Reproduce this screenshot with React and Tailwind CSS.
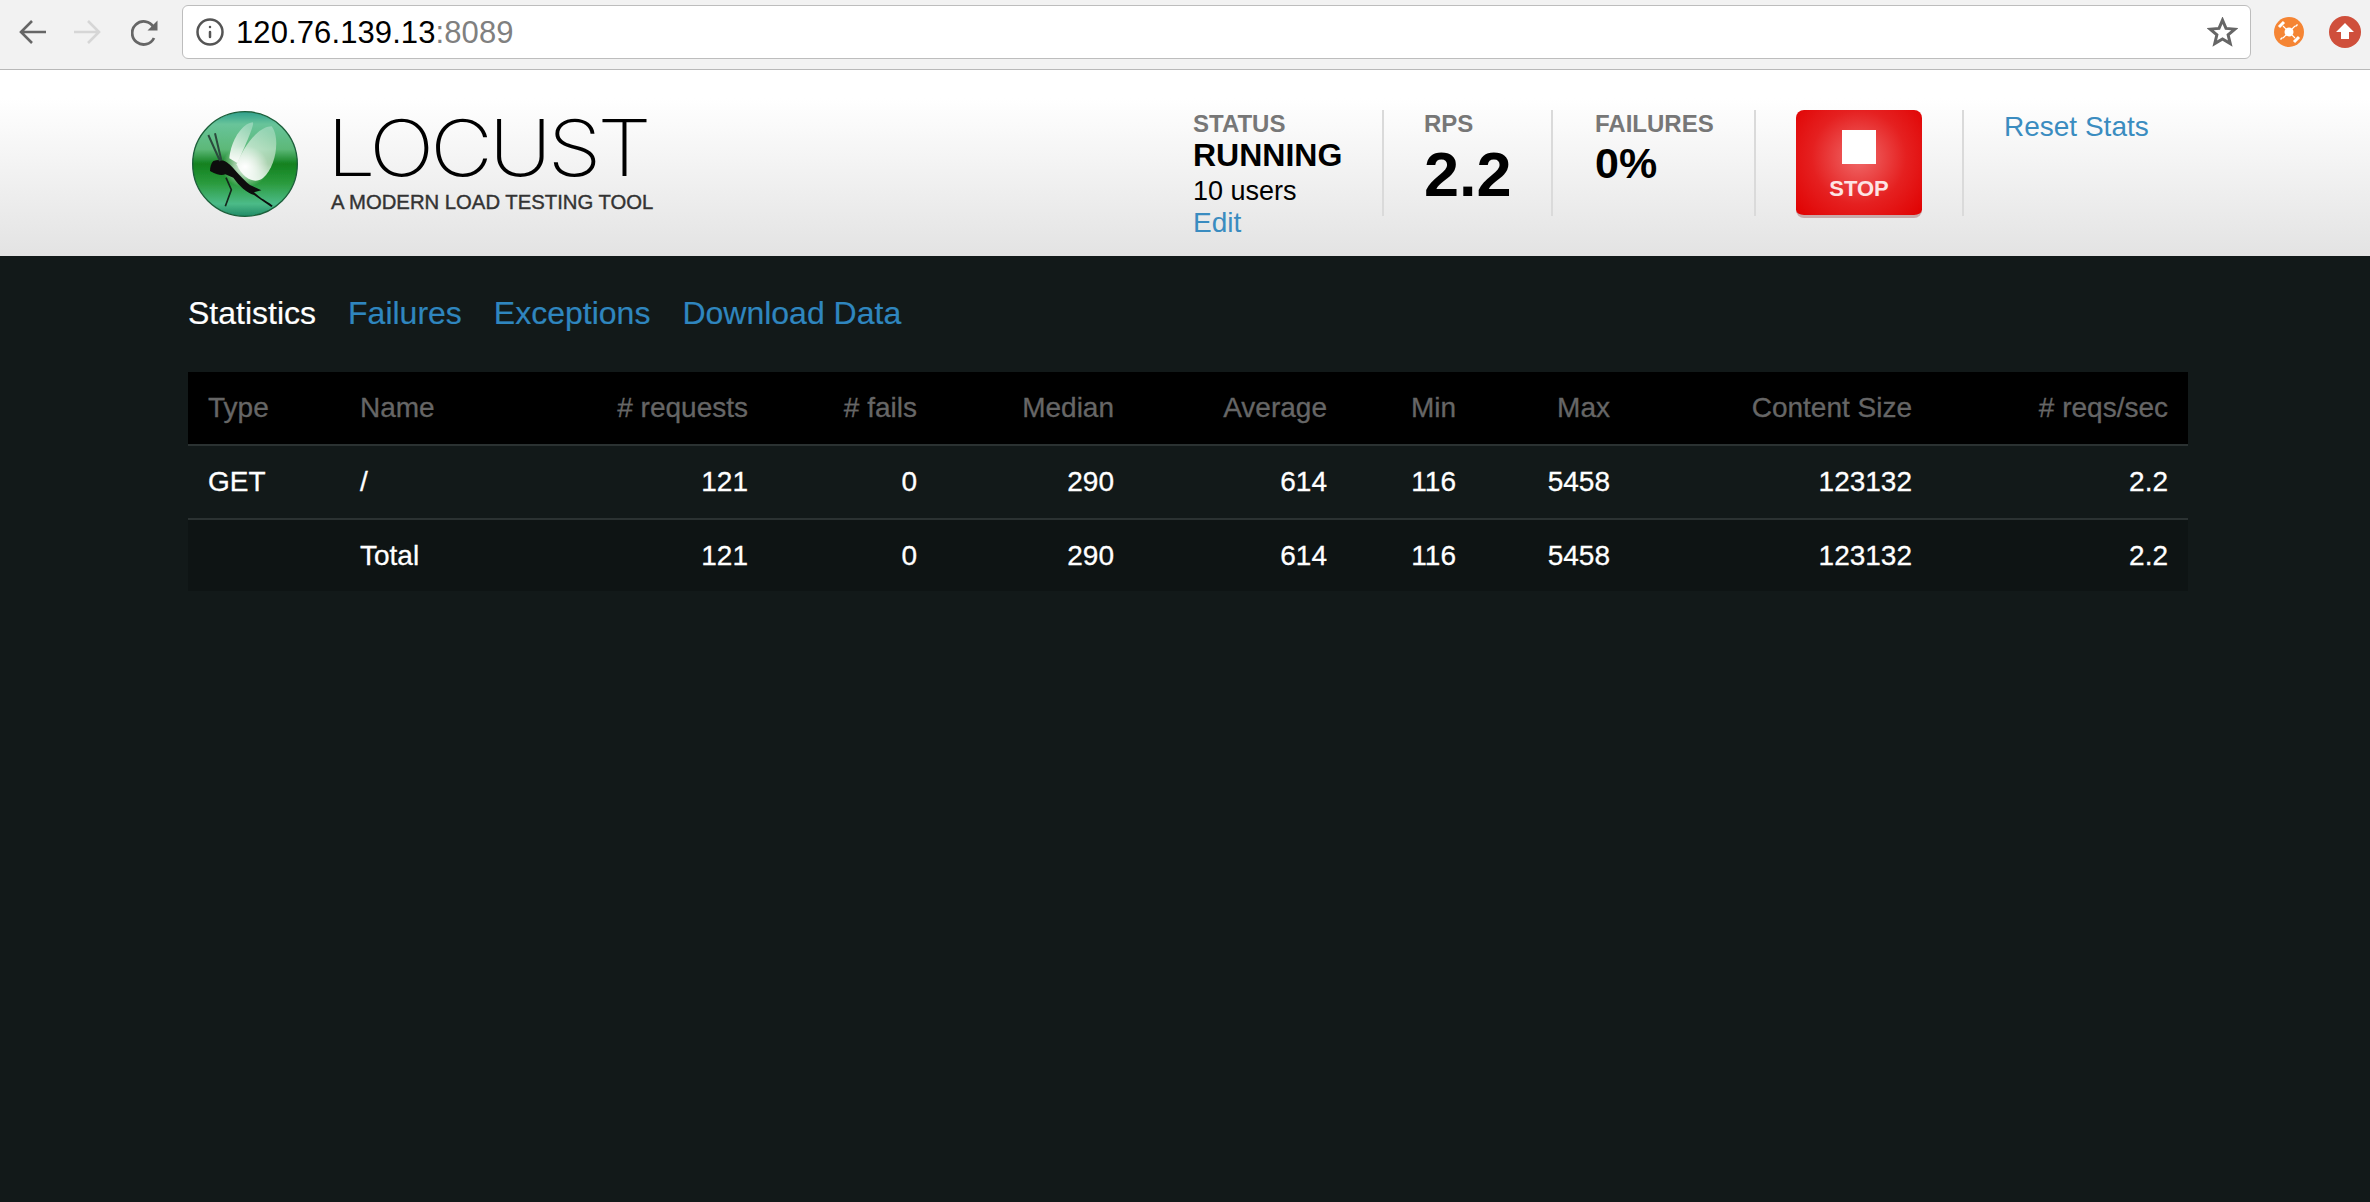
import { Info } from "lucide-react";

const columns = [
  { label: "Type", width: "w-[152px]", left: true },
  { label: "Name", width: "w-[240px]", left: true },
  { label: "# requests", width: "w-[188px]" },
  { label: "# fails", width: "w-[169px]" },
  { label: "Median", width: "w-[197px]" },
  { label: "Average", width: "w-[213px]" },
  { label: "Min", width: "w-[129px]" },
  { label: "Max", width: "w-[154px]" },
  { label: "Content Size", width: "w-[302px]" },
  { label: "# reqs/sec", width: "w-[256px]" },
];

const rows = [
  ["GET", "/", "121", "0", "290", "614", "116", "5458", "123132", "2.2"],
  ["", "Total", "121", "0", "290", "614", "116", "5458", "123132", "2.2"],
];

function BrowserBar() {
  return (
    <div className="flex h-[70px] items-center border-b border-[#b8b8b8] bg-[#f2f2f2] pb-[5px]">
      <svg className="ml-[19px] h-[26px] w-[27px]" viewBox="0 0 27 26" fill="none" stroke="#666" strokeWidth="2.6">
        <path d="M1.5 13H27M13 2 2 13l11 11" />
      </svg>
      <svg className="ml-[28px] h-[26px] w-[27px]" viewBox="0 0 27 26" fill="none" stroke="#d6d6d6" strokeWidth="2.6">
        <path d="M0 13h25.5M14 2l11 11-11 11" />
      </svg>
      <svg className="ml-[30px] h-[27px] w-[28px]" viewBox="0 0 28 27" fill="none" stroke="#666" strokeWidth="2.8">
        <path d="M23 19a11.5 11.5 0 1 1-.5-11" />
        <path d="M26.5 1.5v10h-10z" fill="#666" stroke="none" />
      </svg>
      <div className="ml-[23px] flex h-[54px] w-[2069px] items-center rounded-[6px] border border-[#bdbdbd] bg-white pl-[12px] pr-[12px]">
        <Info className="h-[30px] w-[30px] text-[#555]" strokeWidth={2} />
        <div className="ml-[11px] font-['Liberation_Sans',sans-serif] text-[31px] leading-none tracking-[0.1px] text-black">
          120.76.139.13<span className="text-[#808080]">:8089</span>
        </div>
        <svg className="ml-auto h-[30px] w-[31px]" viewBox="0 0 24 24" fill="none" stroke="#666" strokeWidth="2.4" strokeLinejoin="miter">
          <path d="M12 2.5l2.8 6.6 7.1.6-5.4 4.6 1.7 7-6.2-3.7-6.2 3.7 1.7-7-5.4-4.6 7.1-.6z" />
        </svg>
      </div>
      <svg className="ml-[23px] h-[30px] w-[30px]" viewBox="0 0 30 30">
        <circle cx="15" cy="15" r="15" fill="#f58534" />
        <circle cx="15" cy="15" r="4.5" fill="#fff" />
        <path d="M5 10l5-5M20 25l5-5" stroke="#fff" strokeWidth="3" />
        <path d="M22 8l1 1M7 21l1 1" stroke="#fff" strokeWidth="3" />
        <path d="M9 9l12 12M21 9 9 21" stroke="#fff" strokeWidth="1.2" />
      </svg>
      <svg className="ml-[25px] h-[32px] w-[32px]" viewBox="0 0 32 32">
        <circle cx="16" cy="16" r="16" fill="#cf4f3b" />
        <path d="M16 7l9 9h-5v7h-8v-7H7z" fill="#fff" />
      </svg>
    </div>
  );
}

function LocustLogo() {
  return (
    <svg className="h-[110px] w-[110px] shrink-0" viewBox="60 55 330 330">
      <defs>
        <linearGradient id="ball" x1="0" y1="0" x2="0" y2="1">
          <stop offset="0" stopColor="#2f9f8c" />
          <stop offset="0.12" stopColor="#68c49a" />
          <stop offset="0.36" stopColor="#5cb878" />
          <stop offset="0.5" stopColor="#12811f" />
          <stop offset="0.68" stopColor="#2a9a3c" />
          <stop offset="0.88" stopColor="#4cbb88" />
          <stop offset="1" stopColor="#1f8a66" />
        </linearGradient>
        <radialGradient id="glow" cx="0.5" cy="0.5" r="0.5">
          <stop offset="0" stopColor="#fff" stopOpacity="1" />
          <stop offset="0.5" stopColor="#fff" stopOpacity="0.55" />
          <stop offset="1" stopColor="#fff" stopOpacity="0" />
        </radialGradient>
        <linearGradient id="wing" x1="0.2" y1="1" x2="0.6" y2="0">
          <stop offset="0" stopColor="#fff" stopOpacity="0.95" />
          <stop offset="1" stopColor="#fff" stopOpacity="0.3" />
        </linearGradient>
        <filter id="soft">
          <feGaussianBlur stdDeviation="1.6" />
        </filter>
      </defs>
      <g filter="url(#soft)">
        <circle cx="225" cy="217" r="157" fill="url(#ball)" stroke="#1c5f3a" strokeWidth="4" />
        <ellipse cx="225" cy="225" rx="70" ry="62" fill="url(#glow)" />
        <path d="M178 200C182 150 215 95 248 92c8 2-22 70-46 122z" fill="url(#wing)" />
        <path d="M200 218C228 150 270 104 305 104c26 34 14 120-26 155-24 18-58 6-79-41z" fill="url(#wing)" />
        <path d="M120 238c0-12 4-24 10-30 14-5 30-3 40 4 14 8 24 24 36 36 12 12 22 24 34 32 10 5 22 10 34 16l-22 6 22 18c10 6 24 14 34 22l-4 4-52-36c-22-8-44-26-62-52l-24-10c-10 5-26 2-46-10z" fill="#0c0f0c" />
        <path d="M150 208 115 130M154 206 135 125" stroke="#2b4a3c" strokeWidth="6" fill="none" />
        <path d="M168 258l16 36-18 50" stroke="#14261c" strokeWidth="5" fill="none" />
      </g>
    </svg>
  );
}

function Stat({ label, children, className }) {
  return (
    <div className={`h-[106px] border-r-2 border-[#dadada] ${className}`}>
      <div className="text-[24px] font-bold leading-[27px] text-[#777]">{label}</div>
      {children}
    </div>
  );
}

function Header() {
  return (
    <div className="h-[186px] bg-gradient-to-b from-white from-15% to-[#e3e3e3] pl-[190px] pt-[40px]">
      <div className="flex items-start font-['Liberation_Sans',sans-serif]">
        <LocustLogo />
        <div className="ml-[27px] mt-[-4px] w-[361px]">
          <div className="origin-left scale-x-[1.105] font-['Inter',sans-serif] text-[78px] font-extralight leading-[84px] tracking-[-3.5px] text-black">LOCUST</div>
          <div className="mt-[-2px] pl-[4px] text-[20.3px] leading-[28px] text-[#333] [-webkit-text-stroke:0.4px_#333]">A MODERN LOAD TESTING TOOL</div>
        </div>
        <Stat label="STATUS" className="ml-[505px] w-[191px]">
          <div className="mt-[1px] text-[32px] font-bold leading-[35px] text-black">RUNNING</div>
          <div className="mt-[2px] text-[27px] leading-[33px] text-black">10 users</div>
          <div className="text-[28px] leading-[29px] text-[#3a8cc0]">Edit</div>
        </Stat>
        <Stat label="RPS" className="w-[169px] pl-[40px]">
          <div className="mt-[1px] text-[63px] font-bold leading-[72px] text-black">2.2</div>
        </Stat>
        <Stat label="FAILURES" className="w-[203px] pl-[42px]">
          <div className="mt-[1px] text-[43px] font-bold leading-[50px] text-black">0%</div>
        </Stat>
        <div className="h-[106px] w-[208px] border-r-2 border-[#dadada] pl-[40px]">
          <div className="flex h-[108px] w-[126px] flex-col items-center rounded-[8px] border-b-[3px] border-[#c9a9a9] bg-[radial-gradient(circle_at_50%_45%,#f06a6a_0%,#e52020_55%,#e00000_100%)] pt-[20px]">
            <div className="h-[34px] w-[34px] bg-white" />
            <div className="mt-[13px] text-[22px] font-bold leading-[24px] text-[#fde4e4]">STOP</div>
          </div>
        </div>
        <div className="pt-[1px] pl-[40px] text-[28px] leading-[32px] text-[#3a8cc0]">Reset Stats</div>
      </div>
    </div>
  );
}

function StatsTable() {
  return (
    <table className="w-[2000px] table-fixed border-collapse text-[28px] [-webkit-text-stroke:0.3px]">
      <thead>
        <tr className="h-[73px] border-b-2 border-[#2b3232] bg-black text-[#666]">
          {columns.map((c) => (
            <th key={c.label} className={`${c.width} px-[20px] font-normal ${c.left ? "text-left" : "text-right"}`}>
              {c.label}
            </th>
          ))}
        </tr>
      </thead>
      <tbody className="text-white">
        {rows.map((row, i) => (
          <tr key={i} className={i === 0 ? "h-[74px] border-b-2 border-[#2b3232]" : "h-[72px] bg-[#0e1414]"}>
            {row.map((cell, j) => (
              <td key={j} className={`px-[20px] ${columns[j].left ? "text-left" : "text-right"}`}>
                {cell}
              </td>
            ))}
          </tr>
        ))}
      </tbody>
    </table>
  );
}

export default function App() {
  return (
    <div className="flex h-[1202px] w-[2370px] flex-col overflow-hidden bg-[#121919] font-['Liberation_Sans',sans-serif]">
      <BrowserBar />
      <Header />
      <div className="pl-[188px]">
        <div className="mt-[35px] flex gap-[32px] text-[32px] leading-[44px] text-[#2f86bf] [-webkit-text-stroke:0.2px]">
          <span className="text-white">Statistics</span>
          <span>Failures</span>
          <span>Exceptions</span>
          <span>Download Data</span>
        </div>
        <div className="mt-[37px]">
          <StatsTable />
        </div>
      </div>
    </div>
  );
}
